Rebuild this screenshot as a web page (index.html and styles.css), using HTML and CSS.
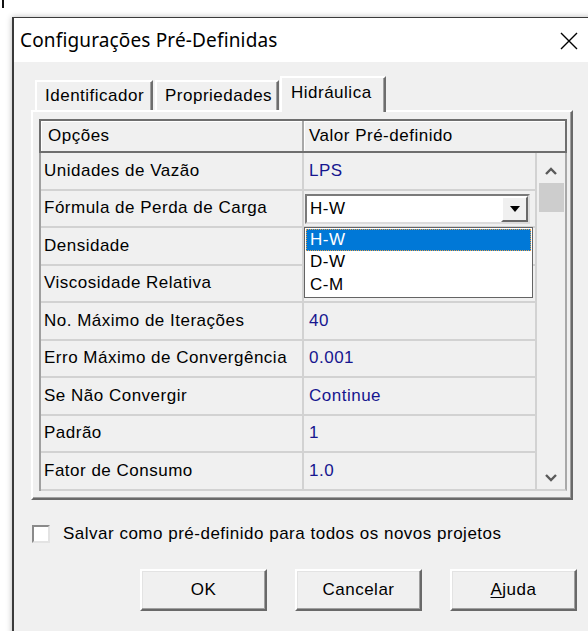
FILE: index.html
```html
<!DOCTYPE html>
<html lang="pt">
<head>
<meta charset="utf-8">
<title>Configurações Pré-Definidas</title>
<link rel="stylesheet" href="styles.css">
</head>
<body>
<div class="caret"></div>
<div class="dialog">
  <div class="titlebar">
    <span class="title">Configurações Pré-Definidas</span>
    <svg class="close" viewBox="0 0 18 18" width="18" height="18"><path d="M1 1 L17 17 M17 1 L1 17" stroke="#000" stroke-width="1.4" fill="none"/></svg>
  </div>
  <div class="content">
    <div class="tabs">
      <div class="tab tab-id">Identificador</div>
      <div class="tab tab-prop">Propriedades</div>
      <div class="tab tab-active">Hidráulica</div>
    </div>
    <div class="panel">
      <div class="grid">
        <div class="ghead">
          <div class="hcell hcell-opt">Opções</div>
          <div class="hcell hcell-val">Valor Pré-definido</div>
        </div>
        <div class="gbody">
          <div class="sb">
            <div class="sb-btn sb-up"><svg viewBox="0 0 12 8" width="12" height="8"><polyline points="1,7 6,2 11,7" fill="none" stroke="#5a5a5a" stroke-width="2.4"/></svg></div>
            <div class="sb-thumb"></div>
            <div class="sb-track"></div>
            <div class="sb-btn sb-down"><svg viewBox="0 0 12 8" width="12" height="8"><polyline points="1,1 6,6 11,1" fill="none" stroke="#5a5a5a" stroke-width="2.4"/></svg></div>
          </div>

          <div class="cell c1">Unidades de Vazão</div>
          <div class="cell c2">LPS</div>

          <div class="cell c1">Fórmula de Perda de Carga</div>
          <div class="cell c2 c2-combo">
            <div class="combo">
              <span class="combo-text">H-W</span>
              <span class="combo-btn"><svg viewBox="0 0 10 6" width="10" height="6"><polygon points="0,0 10,0 5,6" fill="#000"/></svg></span>
            </div>
            <div class="dropdown">
              <div class="opt opt-sel">H-W</div>
              <div class="opt">D-W</div>
              <div class="opt">C-M</div>
            </div>
          </div>

          <div class="cell c1">Densidade</div>
          <div class="cell c2"></div>

          <div class="cell c1">Viscosidade Relativa</div>
          <div class="cell c2"></div>

          <div class="cell c1">No. Máximo de Iterações</div>
          <div class="cell c2">40</div>

          <div class="cell c1">Erro Máximo de Convergência</div>
          <div class="cell c2">0.001</div>

          <div class="cell c1">Se Não Convergir</div>
          <div class="cell c2">Continue</div>

          <div class="cell c1">Padrão</div>
          <div class="cell c2">1</div>

          <div class="cell c1">Fator de Consumo</div>
          <div class="cell c2">1.0</div>
        </div>
      </div>
    </div>

    <label class="check-row">
      <span class="checkbox"></span>
      <span class="check-label">Salvar como pré-definido para todos os novos projetos</span>
    </label>

    <div class="buttons">
      <div class="btn">OK</div>
      <div class="btn">Cancelar</div>
      <div class="btn"><u>A</u>juda</div>
    </div>
  </div>
</div>
</body>
</html>
```

FILE: styles.css
```css
* { box-sizing: border-box; }

html, body {
  margin: 0;
  padding: 0;
}

body {
  width: 588px;
  height: 631px;
  overflow: hidden;
  background: #fff;
  font-family: "Liberation Sans", Arial, sans-serif;
  font-size: 17px;
  letter-spacing: 0.5px;
  color: #000;
}

/* text cursor left over at the top edge */
.caret {
  width: 2px;
  height: 8px;
  margin-left: 2px;
  background: #111;
}

.dialog {
  margin: 9px 0 0 12px;
  width: 600px;
  height: 640px;
  border-top: 1px solid #3a3a3a;
  border-left: 2px solid #3a3a3a;
  box-shadow: 0 0 6px rgba(0, 0, 0, 0.28);
  background: #f0f0f0;
  display: flex;
  flex-direction: column;
}

.titlebar {
  flex: none;
  height: 44px;
  background: #fff;
  display: flex;
  align-items: center;
  justify-content: space-between;
  padding: 0 34px 0 6px;
}

.title {
  font-family: "Noto Sans", "Liberation Sans", sans-serif;
  font-size: 19px;
  letter-spacing: 0.15px;
}

.close {
  display: block;
  margin-top: 2px;
}

.content {
  padding: 14px 0 0 17px;
  display: flex;
  flex-direction: column;
}

/* tab strip */
.tabs {
  display: flex;
  align-items: flex-end;
  margin-left: 4px;
  margin-bottom: -2px;
  position: relative;
  z-index: 1;
}

.tab {
  height: 30px;
  margin-bottom: 2px;
  display: flex;
  align-items: center;
  background: #f0f0f0;
  border-top: 2px solid #fff;
  border-left: 2px solid #fff;
  border-right: 2px solid #6d6d6d;
  box-shadow: inset -1px 0 0 #a0a0a0;
}

.tab-id { width: 118px; padding-left: 8px; }
.tab-prop { width: 124px; padding-left: 8px; margin-left: 2px; }
.tab-active {
  width: 106px;
  height: 36px;
  margin-bottom: 0;
  padding-left: 9px;
  padding-bottom: 4px;
  margin-left: 1px;
}

.panel {
  width: 542px;
  height: 390px;
  border-top: 2px solid #fff;
  border-left: 2px solid #fff;
  border-right: 2px solid #696969;
  border-bottom: 2px solid #696969;
  box-shadow: inset -1px -1px 0 #a0a0a0;
  padding: 7px 4px 0 6px;
}

/* property grid */
.grid {
  width: 528px;
}

.ghead {
  height: 34px;
  display: flex;
  border: 2px solid #6e6e6e;
}

.hcell {
  display: flex;
  align-items: center;
  box-shadow: inset 1px 1px 0 #fff;
}

.hcell-opt {
  width: 263px;
  padding-left: 7px;
  border-right: 2px solid #a8a8a8;
}

.hcell-val {
  flex: 1;
  padding-left: 5px;
}

.gbody {
  display: grid;
  grid-template-columns: 263px 233px 30px;
  grid-template-rows: repeat(9, 37.5px);
  border-left: 2px solid #a0a0a0;
}

.cell {
  display: flex;
  align-items: center;
  border-right: 2px solid #d2d2d2;
  border-bottom: 2px solid #d2d2d2;
  white-space: nowrap;
}

.c1 { padding-left: 3px; }

.c2 {
  padding-left: 5px;
  color: #16168f;
}

.c2-combo {
  position: relative;
  padding: 2px 5px 0 1px;
  color: #000;
}

.combo {
  width: 225px;
  height: 30px;
  display: flex;
  align-items: stretch;
  background: #fff;
  border: 2px solid;
  border-color: #7a7a7a #dcdcdc #dcdcdc #7a7a7a;
}

.combo-text {
  flex: 1;
  display: flex;
  align-items: center;
  padding-left: 3px;
}

.combo-btn {
  width: 27px;
  display: flex;
  align-items: center;
  justify-content: center;
  background: #f0f0f0;
  border: 2px solid;
  border-color: #fff #696969 #696969 #fff;
}

.dropdown {
  position: absolute;
  left: 0;
  top: 36px;
  width: 229px;
  height: 71px;
  background: #fff;
  border: 1px solid #646464;
  padding: 1px;
  z-index: 2;
}

.opt {
  height: 22.5px;
  display: flex;
  align-items: center;
  padding-left: 4px;
}

.opt-sel {
  background: #0078d7;
  color: #fff;
  outline: 1px dotted #e8a048;
  outline-offset: -1px;
}

/* vertical scrollbar */
.sb {
  grid-column: 3;
  grid-row: 1 / -1;
  display: flex;
  flex-direction: column;
  align-items: center;
  border-right: 2px solid #a8a8a8;
  border-bottom: 2px solid #d2d2d2;
}

.sb-btn {
  height: 30px;
  width: 100%;
  display: flex;
  justify-content: center;
}

.sb-up { align-items: flex-start; padding-top: 14px; }
.sb-down { align-items: flex-end; padding-bottom: 7px; }

.sb-thumb {
  width: 25px;
  height: 29px;
  background: #cdcdcd;
}

.sb-track { flex: 1; }

/* checkbox row */
.check-row {
  display: flex;
  align-items: center;
  margin: 25px 0 0 1px;
  height: 18px;
}

.checkbox {
  width: 18px;
  height: 18px;
  background: #fff;
  border: 2px solid;
  border-color: #8a8a8a #e3e3e3 #e3e3e3 #8a8a8a;
}

.check-label {
  margin-left: 13px;
}

/* dialog buttons */
.buttons {
  display: flex;
  gap: 28px;
  margin: 26px 0 0 109px;
}

.btn {
  width: 127px;
  height: 42px;
  display: flex;
  align-items: center;
  justify-content: center;
  border: 2px solid;
  border-color: #fff #696969 #696969 #fff;
  box-shadow: inset -1px -1px 0 #a0a0a0, inset 1px 1px 0 #e3e3e3;
}

.btn u { text-decoration-thickness: 1px; text-underline-offset: 2px; }
```
